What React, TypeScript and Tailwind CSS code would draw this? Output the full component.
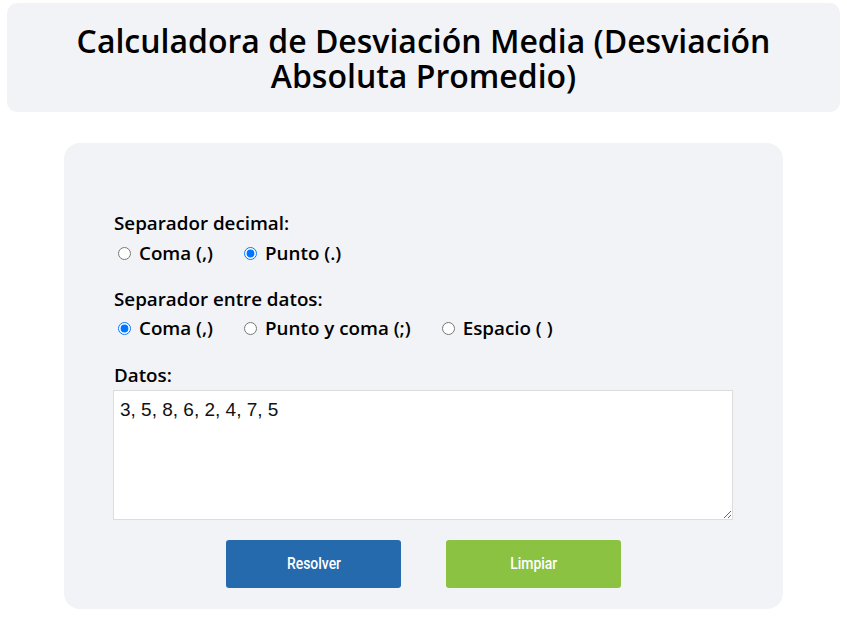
import { useState } from "react";

const sans = { fontFamily: '"Open Sans", "Noto Sans", sans-serif' };

function Radio({
  name,
  label,
  checked,
  onChange,
}: {
  name: string;
  label: string;
  checked: boolean;
  onChange: () => void;
}) {
  return (
    <label className="flex items-center cursor-pointer">
      <input
        type="radio"
        name={name}
        checked={checked}
        onChange={onChange}
        className="w-[13px] h-[13px] ml-[4px] mr-[8px] accent-[#0075ff]"
      />
      <span>{label}</span>
    </label>
  );
}

export default function App() {
  const [decimal, setDecimal] = useState("punto");
  const [sep, setSep] = useState("coma");
  const [datos, setDatos] = useState("3, 5, 8, 6, 2, 4, 7, 5");

  return (
    <div className="min-h-screen bg-white px-[7px] pt-[3px]" style={sans}>
      {/* Header */}
      <div className="bg-[#f2f3f6] rounded-[10px] h-[109px] flex items-center justify-center">
        <h1 className="text-[32px] leading-[35px] font-semibold text-black text-center px-10">
          Calculadora de Desviación Media (Desviación Absoluta Promedio)
        </h1>
      </div>

      {/* Calculator card */}
      <div className="mt-[31px] mx-auto w-[719px] bg-[#f2f3f6] rounded-[16px] pt-[68px] pb-[21px] px-[50px] text-[18.8px] font-semibold text-black">
        <div className="leading-[24px]">Separador decimal:</div>
        <div className="flex gap-[27px] mt-[6px] leading-[24px]">
          <Radio name="dec" label="Coma (,)" checked={decimal === "coma"} onChange={() => setDecimal("coma")} />
          <Radio name="dec" label="Punto (.)" checked={decimal === "punto"} onChange={() => setDecimal("punto")} />
        </div>

        <div className="leading-[24px] mt-[22px]">Separador entre datos:</div>
        <div className="flex gap-[27px] mt-[5px] leading-[24px]">
          <Radio name="sep" label="Coma (,)" checked={sep === "coma"} onChange={() => setSep("coma")} />
          <Radio name="sep" label="Punto y coma (;)" checked={sep === "pyc"} onChange={() => setSep("pyc")} />
          <Radio name="sep" label="Espacio ( )" checked={sep === "esp"} onChange={() => setSep("esp")} />
        </div>

        <div className="leading-[24px] mt-[23px]">Datos:</div>
        <textarea
          value={datos}
          onChange={(e) => setDatos(e.target.value)}
          className="block mt-[3px] -ml-px w-[620px] h-[130px] bg-white border border-[#dcdcdc] px-[6px] py-[7px] text-[19px] leading-[23px] font-normal text-[#111] outline-none"
          style={{ fontFamily: '"Liberation Sans", Arial, sans-serif' }}
        />

        <div className="flex justify-center gap-[45px] mt-[20px]">
          <button
            className="w-[175px] h-[48px] rounded-[3px] bg-[#266aae] text-white text-[17px] font-medium"
            style={{ fontFamily: 'Roboto, sans-serif' }}
          >
            <span className="inline-block scale-x-[0.82]">Resolver</span>
          </button>
          <button
            className="w-[175px] h-[48px] rounded-[3px] bg-[#8bc241] text-white text-[17px] font-medium"
            style={{ fontFamily: 'Roboto, sans-serif' }}
          >
            <span className="inline-block scale-x-[0.82]">Limpiar</span>
          </button>
        </div>
      </div>
    </div>
  );
}
